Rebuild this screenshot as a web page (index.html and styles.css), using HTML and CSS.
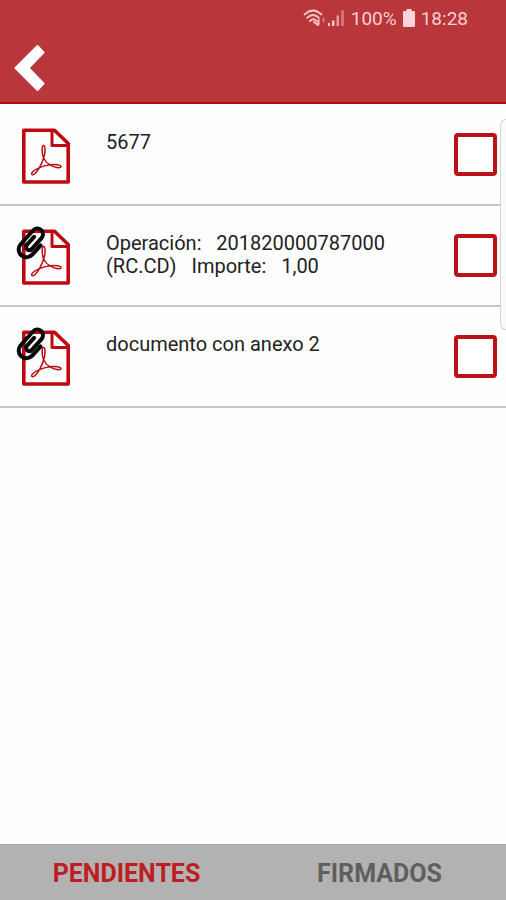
FILE: index.html
```html
<!DOCTYPE html>
<html lang="es">
<head>
    <meta charset="UTF-8">
    <meta name="viewport" content="width=device-width, initial-scale=1.0">
    <title>Documentos pendientes</title>
    <link rel="stylesheet" href="styles.css">
</head>
<body>
    <svg class="symbols" aria-hidden="true">
        <symbol id="pdf" viewBox="0 0 56 60">
            <g fill="none" stroke="#bd0a12" stroke-linejoin="round" stroke-linecap="round">
                <path stroke-width="3.6" d="M7.8 5.3H38.5L52.2 18.5V57H7.8Z"/>
                <path stroke-width="3" d="M36 6V20.4H51"/>
                <path stroke-width="1.5" d="M27.600 33C25.500 27 25.800 20.500 27.600 20.500S29.700 27 27.600 33C29 36 31.500 38.500 34 39.800C39 39 45.500 40 45 41.800S38.500 42.600 34 39.800C30.500 40.300 26.500 41.300 23.500 42.600C21 47 17.500 51 16 49.500S18.500 44.500 23.500 42.600C25.200 39.500 26.700 36 27.600 33Z"/>
            </g>
        </symbol>
        <symbol id="clip" viewBox="0 0 32 36">
            <g transform="translate(16 17) rotate(42)" fill="none" stroke="#080808" stroke-linecap="round" stroke-linejoin="round">
                <path stroke-width="4" d="M8 -4V8.500A7.800 7.800 0 0 1 -7.600 8.500V-10A5.700 5.700 0 0 1 3.800 -10V6A3.700 3.700 0 0 1 -2.600 6V-6"/>
            </g>
        </symbol>
    </svg>

    <header class="header">
        <div class="status-bar">
            <svg class="wifi" viewBox="0 0 24 20" fill="none" stroke="#f6c8ca" stroke-width="1.800" stroke-linecap="round">
                <path d="M1.500 6.500Q10 -1.500 18.500 6.500M4 9.800Q10 4.200 16 9.800M7 13Q10.500 9.500 13.500 13"/>
                <path d="M11 14l4 3M15.500 12v4" stroke-width="2"/>
                <path d="M20.500 10.500v3" stroke="#d98286"/>
            </svg>
            <svg class="signal" viewBox="0 0 18 18">
                <path fill="#f6c8ca" d="M1 14h2v3H1zM5 11.500h2.500V17H5z"/>
                <path fill="#e39b9e" d="M9.500 6.500h2.500V17H9.500z"/>
                <path fill="#d27579" d="M14 1.500h3V17h-3z"/>
            </svg>
            <span class="battery-level">100%</span>
            <svg class="battery" viewBox="0 0 12 18">
                <path fill="#f9d5d9" d="M3.500 0h5v2H11q1 0 1 1v14q0 1-1 1H1q-1 0-1-1V3q0-1 1-1h2.500z"/>
            </svg>
            <span class="clock">18:28</span>
        </div>
        <button class="back-button" type="button" aria-label="Volver">
            <svg viewBox="0 0 32 48">
                <path fill="#fff" stroke="#fff" stroke-width="2" stroke-linejoin="round" d="M23.500 2L29.500 8.500L14.500 24L29.500 39.500L23.500 46L1.500 24Z"/>
            </svg>
        </button>
    </header>

    <main class="content">
        <ul class="documents">
            <li class="document">
                <div class="document-icon">
                    <svg class="pdf"><use href="#pdf"/></svg>
                </div>
                <label class="document-name" for="doc1">5677</label>
                <input class="document-check" type="checkbox" id="doc1">
            </li>
            <li class="document">
                <div class="document-icon">
                    <svg class="pdf"><use href="#pdf"/></svg>
                    <svg class="clip"><use href="#clip"/></svg>
                </div>
                <label class="document-name" for="doc2">Operación:   201820000787000 (RC.CD)   Importe:   1,00</label>
                <input class="document-check" type="checkbox" id="doc2">
            </li>
            <li class="document">
                <div class="document-icon">
                    <svg class="pdf"><use href="#pdf"/></svg>
                    <svg class="clip"><use href="#clip"/></svg>
                </div>
                <label class="document-name" for="doc3">documento con anexo 2</label>
                <input class="document-check" type="checkbox" id="doc3">
            </li>
        </ul>
        <div class="edge-handle"></div>
    </main>

    <nav class="tabs">
        <button class="tab active" type="button">PENDIENTES</button>
        <button class="tab" type="button">FIRMADOS</button>
    </nav>
</body>
</html>
```

FILE: styles.css
```css
* {
    box-sizing: border-box;
}

body {
    margin: 0;
    min-height: 100vh;
    display: flex;
    flex-direction: column;
    font-family: Roboto, Arial, sans-serif;
    background: #fefefe;
    color: #222;
}

.symbols {
    display: none;
}

.header {
    background: #b9363a;
    border-bottom: 2px solid #ad0c10;
}

.status-bar {
    display: flex;
    justify-content: flex-end;
    align-items: center;
    height: 36px;
    padding-right: 38px;
    font-size: 19px;
    color: #f9cfd1;
}

.wifi {
    width: 24px;
    height: 20px;
}

.signal {
    width: 18px;
    height: 18px;
    margin-right: 6px;
}

.battery {
    width: 12px;
    height: 18px;
    margin: 0 6px;
}

.back-button {
    display: block;
    margin: 8px 14px 10px;
    padding: 0;
    border: 0;
    background: none;
    cursor: pointer;
}

.back-button svg {
    display: block;
    width: 32px;
    height: 48px;
}

.content {
    position: relative;
    flex: 1;
    overflow: hidden;
}

.documents {
    margin: 0;
    padding: 1px 0 0;
    list-style: none;
}

.document {
    display: flex;
    align-items: center;
    min-height: 101px;
    padding: 0 9px 0 16px;
    border-bottom: 2px solid #c4c4c4;
}

.document-icon {
    position: relative;
    width: 56px;
    height: 60px;
    margin-right: 34px;
}

.pdf {
    display: block;
    width: 56px;
    height: 60px;
}

.clip {
    position: absolute;
    top: 0;
    left: 0;
    width: 32px;
    height: 36px;
}

.document-name {
    flex: 1;
    align-self: flex-start;
    padding: 26px 60px 0 0;
    font-size: 20px;
    line-height: 23px;
    white-space: pre-wrap;
}

.document-check {
    appearance: none;
    width: 43px;
    height: 43px;
    margin: 0;
    border: 4px solid #bb1219;
    border-radius: 4px;
    background: #fff;
    cursor: pointer;
}

.document-check:checked {
    background: #bb1219;
    box-shadow: inset 0 0 0 5px #fff;
}

.edge-handle {
    position: absolute;
    top: 15px;
    right: 0;
    width: 6px;
    height: 211px;
    border: 1px solid #d4d4d4;
    border-right: 0;
    border-radius: 6px 0 0 6px;
    background: #fafafa;
    pointer-events: none;
}

.tabs {
    display: flex;
    height: 56px;
    background: #b2b2b2;
    border-top: 1px solid #a6a6a6;
}

.tab {
    flex: 1;
    padding: 2px 0 0;
    border: 0;
    background: none;
    font-family: inherit;
    font-size: 25px;
    font-weight: 700;
    color: #5f5f5f;
    cursor: pointer;
}

.tab.active {
    color: #bd1e23;
}
```
